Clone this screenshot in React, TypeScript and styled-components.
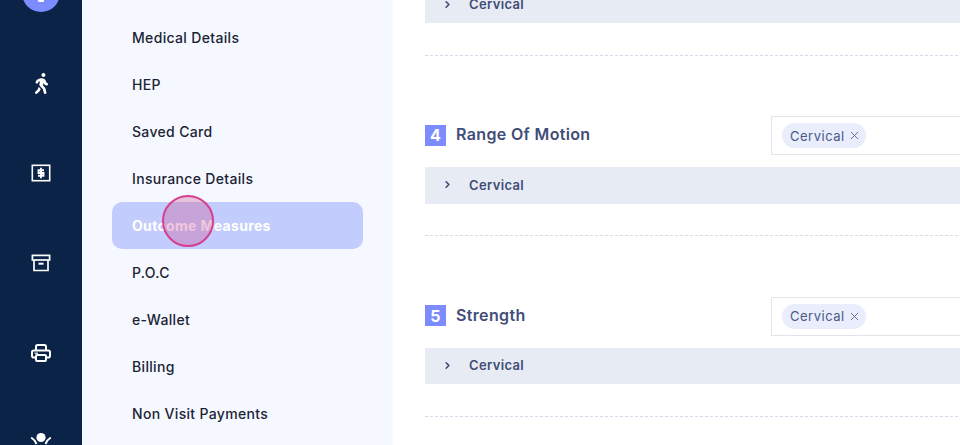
import { createGlobalStyle } from 'styled-components'
import styled from 'styled-components'
import { X, ChevronRight } from 'lucide-react'
import { FaWalking } from 'react-icons/fa'

const GlobalStyle = createGlobalStyle`
  html, body { margin: 0; padding: 0; background: #fff; overflow: hidden; }
  * { box-sizing: border-box; }
`

const Page = styled.div`
  display: grid;
  grid-template-columns: 82px 311px 1fr;
  height: 445px;
  width: 960px;
  overflow: hidden;
  font-family: Inter, "Liberation Sans", sans-serif;
`

const Rail = styled.nav`
  background: #0b2347;
  display: flex;
  flex-direction: column;
  align-items: center;
  margin-top: -26px;
`

const Avatar = styled.div`
  width: 38px;
  height: 38px;
  border-radius: 50%;
  background: #7c8cff;
  margin-bottom: 26px;
  flex: none;
  display: flex;
  justify-content: center;
  align-items: flex-end;
  padding-bottom: 10px;
  &::after {
    content: '';
    width: 6px;
    height: 3px;
    border-radius: 2px;
    background: #fff;
  }
`

const RailSlot = styled.div`
  height: 90px;
  flex: none;
  display: flex;
  align-items: center;
  justify-content: center;
  color: #fff;
`

const Side = styled.aside`
  background: #f5f8ff;
  padding: 14px 30px 0;
  display: flex;
  flex-direction: column;
`

const SideItem = styled.div<{ $active?: boolean }>`
  height: 47px;
  flex: none;
  display: flex;
  align-items: center;
  padding-left: 20px;
  border-radius: 10px;
  font-size: 14px;
  letter-spacing: 0.33px;
  font-weight: ${p => (p.$active ? 700 : 500)};
  color: ${p => (p.$active ? '#fff' : '#1c2434')};
  background: ${p => (p.$active ? '#c3cdfd' : 'transparent')};
  position: relative;
`

const Ripple = styled.span`
  position: absolute;
  left: 50px;
  top: -7px;
  width: 52px;
  height: 52px;
  border-radius: 50%;
  border: 2px solid #d63f8f;
  background: rgba(205, 70, 140, 0.3);
`

const Main = styled.main`
  padding-left: 32px;
  margin-top: -13.4px;
  width: 640px;
`

const Bar = styled.div`
  height: 36.5px;
  background: #e7ebf3;
  display: flex;
  align-items: center;
  padding-left: 17px;
  padding-bottom: 1px;
  gap: 16px;
  color: #3f4d78;
  font-size: 13px;
  font-weight: 600;
  letter-spacing: 0.35px;
`

const Divider = styled.div`
  margin-top: 31.8px;
  border-top: 1px dashed #d8d9e8;
  margin-bottom: 60.2px;
`

const Head = styled.div`
  display: grid;
  grid-template-columns: 346px 1fr;
  align-items: center;
  margin-bottom: 12px;
`

const Title = styled.h3`
  margin: 0 0 1px;
  display: flex;
  align-items: center;
  gap: 10px;
  font-size: 16px;
  font-weight: 600;
  letter-spacing: 0.35px;
  color: #3f4d78;
`

const TitleLabel = styled.span`
  margin-bottom: 2px;
`

const Num = styled.span`
  width: 21px;
  height: 21px;
  background: #7c8cff;
  color: #fff;
  font-size: 16px;
  font-weight: 700;
  display: flex;
  align-items: center;
  justify-content: center;
`

const Select = styled.div`
  height: 39px;
  border: 1px solid #e2e4ea;
  padding-left: 10px;
  display: flex;
  align-items: center;
`

const Chip = styled.span`
  height: 25px;
  width: 84px;
  border-radius: 13px;
  background: #e9edfc;
  color: #4b5a85;
  font-size: 13px;
  letter-spacing: 0.5px;
  display: flex;
  align-items: center;
  padding-left: 8px;
  gap: 3px;
`

const DollarIcon = () => (
  <svg width="20" height="18" viewBox="0 0 20 18" fill="none" stroke="currentColor" strokeWidth="1.6">
    <rect x="1.3" y="1.3" width="17.4" height="15.4" />
    <path d="M13 6.2H7.5V9H12.5V11.8H7" strokeWidth="1.9" />
    <path d="M10 3.8V14.2" strokeWidth="1.9" />
  </svg>
)

const ArchiveIcon = () => (
  <svg width="20" height="18" viewBox="0 0 20 18" fill="none" stroke="currentColor" strokeWidth="1.7">
    <rect x="1.4" y="1.4" width="17.2" height="4.6" />
    <path d="M3 6V16.5H17V6" />
    <path d="M7.5 9.7H12.5" strokeWidth="2" />
  </svg>
)

const PrinterIcon = () => (
  <svg width="20" height="18" viewBox="0 0 20 18" fill="none" stroke="currentColor" strokeWidth="2">
    <path d="M5 6.5V2.5A1.5 1.5 0 0 1 6.5 1H13.5A1.5 1.5 0 0 1 15 2.5V6.5" />
    <path d="M4.5 13.5H2.8A1.8 1.8 0 0 1 1 11.7V8.3A1.8 1.8 0 0 1 2.8 6.5H17.2A1.8 1.8 0 0 1 19 8.3V11.7A1.8 1.8 0 0 1 17.2 13.5H15.5" />
    <rect x="5" y="11" width="10" height="6" rx="1" />
    <path d="M3.5 9.2H7" strokeWidth="1.2" />
  </svg>
)

const PersonIcon = () => (
  <svg width="22" height="22" viewBox="0 0 22 22" fill="none" stroke="currentColor" strokeWidth="2">
    <circle cx="11" cy="5.5" r="4.6" fill="currentColor" stroke="none" />
    <path d="M1.2 5.5Q4.5 7.5 6.5 12" />
    <path d="M20.8 5.5Q17.5 7.5 15.5 12" />
  </svg>
)

const menu = ['Medical Details', 'HEP', 'Saved Card', 'Insurance Details', 'Outcome Measures', 'P.O.C', 'e-Wallet', 'Billing', 'Non Visit Payments']

const sections = [
  { n: 4, title: 'Range Of Motion' },
  { n: 5, title: 'Strength' },
]

const CervicalBar = () => (
  <Bar>
    <ChevronRight size={11} strokeWidth={3.5} />
    Cervical
  </Bar>
)

export default function App() {
  return (
    <Page>
      <GlobalStyle />
      <Rail>
        <Avatar />
        <RailSlot><FaWalking size={21} /></RailSlot>
        <RailSlot><DollarIcon /></RailSlot>
        <RailSlot><ArchiveIcon /></RailSlot>
        <RailSlot><PrinterIcon /></RailSlot>
        <RailSlot><PersonIcon /></RailSlot>
      </Rail>
      <Side>
        {menu.map(m => (
          <SideItem key={m} $active={m === 'Outcome Measures'}>
            {m}
            {m === 'Outcome Measures' && <Ripple />}
          </SideItem>
        ))}
      </Side>
      <Main>
        <CervicalBar />
        <Divider />
        {sections.map(s => (
          <section key={s.n}>
            <Head>
              <Title><Num>{s.n}</Num><TitleLabel>{s.title}</TitleLabel></Title>
              <Select>
                <Chip>Cervical <X size={13} strokeWidth={1.5} /></Chip>
              </Select>
            </Head>
            <CervicalBar />
            <Divider />
          </section>
        ))}
      </Main>
    </Page>
  )
}
